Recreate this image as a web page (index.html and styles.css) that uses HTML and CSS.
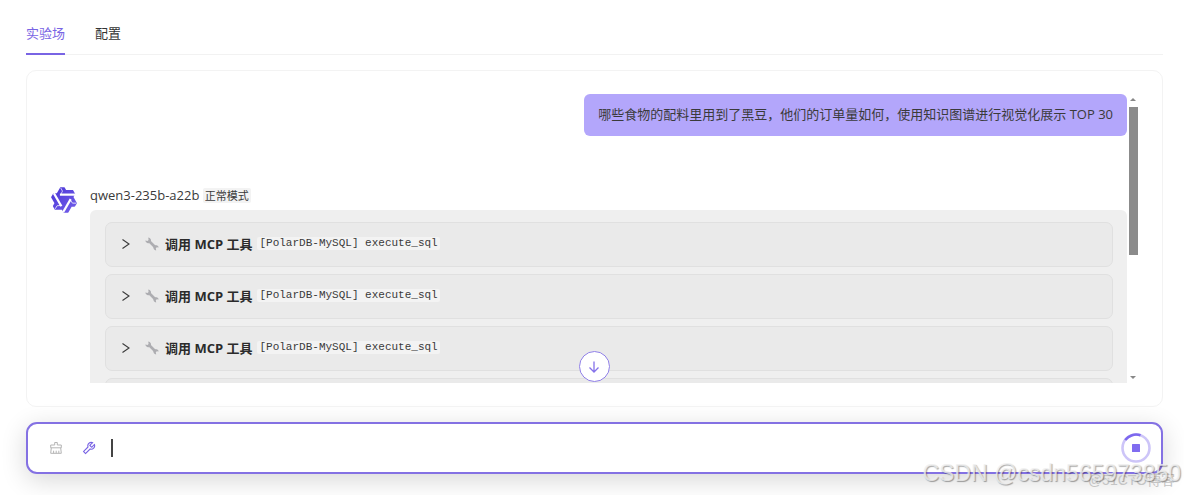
FILE: index.html
```html
<!DOCTYPE html>
<html lang="zh-CN">
<head>
    <meta charset="UTF-8">
    <meta name="viewport" content="width=device-width, initial-scale=1.0">
    <title>实验场</title>
    <link rel="stylesheet" href="styles.css">
</head>
<body>
    <!-- 图标 -->
    <svg class="sprite" aria-hidden="true">
        <symbol id="icon-right" viewBox="0 0 12 12">
            <path d="M2.500 1.500 9 6l-6.500 4.500" fill="none" stroke="currentColor" stroke-width="1.100"/>
        </symbol>
        <symbol id="icon-wrench" viewBox="0 0 14 14">
            <path d="M4 4 10.500 10.500" stroke="#adadb1" stroke-width="2.600"/>
            <path d="M3.200.5a3.100 3.100 0 0 1 2.200 5A3.100 3.100 0 0 1 .3 3.500l2.200.5 1.100-1.100zM8.800 9a2.900 2.900 0 0 1 4.900 1.600l-1.900-.3-1 1 .4 2.100A2.900 2.900 0 0 1 8.800 9z" fill="#adadb1"/>
        </symbol>
    </svg>

    <div class="page">
        <nav class="tabs">
            <a class="tab active" href="#playground">实验场</a>
            <a class="tab" href="#config">配置</a>
        </nav>

        <main class="chat">
            <div class="messages">
                <div class="bubble">哪些食物的配料里用到了黑豆，他们的订单量如何，使用知识图谱进行视觉化展示 TOP 30</div>

                <div class="answer">
                    <svg class="avatar" viewBox="0 0 24 24" aria-hidden="true">
                        <defs>
                            <linearGradient id="logo-fill" x1="0" y1="0" x2="1" y2="1">
                                <stop offset="0" stop-color="#4a35d6"/>
                                <stop offset="1" stop-color="#7460ea"/>
                            </linearGradient>
                            <g id="logo-arm" fill="none" stroke="#fff">
                                <path d="M8.500 7.400h13" stroke-width="1.900"/>
                                <path d="M9.200 7.400 10.700 4.400 9.200 1.700" stroke-width=".6"/>
                            </g>
                        </defs>
                        <path fill="url(#logo-fill)" d="M12.604 1.340c.393.69.784 1.382 1.174 2.075a.18.18 0 00.157.091h5.552c.174 0 .322.11.446.327l1.454 2.570c.19.337.24.478.024.837-.26.43-.513.864-.76 1.300l-.367.658c-.106.196-.223.28-.04.512l2.652 4.637c.172.301.111.494-.043.77-.437.785-.882 1.564-1.335 2.340-.159.272-.352.375-.68.37-.777-.016-1.552-.01-2.327.016a.099.099 0 00-.081.05 575.097 575.097 0 01-2.705 4.740c-.169.293-.38.363-.725.364-.997.003-2.002.004-3.017.002a.537.537 0 01-.465-.271l-1.335-2.323a.09.09 0 00-.083-.049H4.982c-.285.03-.553-.001-.805-.092l-1.603-2.770a.543.543 0 01-.002-.54l1.207-2.120a.198.198 0 000-.197 550.951 550.951 0 01-1.875-3.272l-.79-1.395c-.16-.31-.173-.496.095-.965.465-.813.927-1.625 1.387-2.436.132-.234.304-.334.584-.335a338.300 338.300 0 012.589-.001.124.124 0 00.107-.063l2.806-4.895a.488.488 0 01.422-.246c.524-.001 1.053 0 1.583-.006L11.704 1c.341-.003.724.032.9.34z"/>
                        <use href="#logo-arm"/>
                        <use href="#logo-arm" transform="rotate(120 12 12)"/>
                        <use href="#logo-arm" transform="rotate(240 12 12)"/>
                    </svg>
                    <div class="answer-main">
                        <div class="answer-head">qwen3-235b-a22b <span class="mode">正常模式</span></div>
                        <div class="answer-body">
                            <button class="tool" type="button">
                                <svg class="arrow"><use href="#icon-right"/></svg>
                                <svg class="wrench"><use href="#icon-wrench"/></svg>
                                <strong>调用 MCP 工具</strong>
                                <code>[PolarDB-MySQL] execute_sql</code>
                            </button>
                            <button class="tool" type="button">
                                <svg class="arrow"><use href="#icon-right"/></svg>
                                <svg class="wrench"><use href="#icon-wrench"/></svg>
                                <strong>调用 MCP 工具</strong>
                                <code>[PolarDB-MySQL] execute_sql</code>
                            </button>
                            <button class="tool" type="button">
                                <svg class="arrow"><use href="#icon-right"/></svg>
                                <svg class="wrench"><use href="#icon-wrench"/></svg>
                                <strong>调用 MCP 工具</strong>
                                <code>[PolarDB-MySQL] execute_sql</code>
                            </button>
                            <button class="tool" type="button" aria-label="调用 MCP 工具"></button>
                        </div>
                    </div>
                </div>
            </div>

            <div class="scrollbar" aria-hidden="true">
                <span class="scroll-up"></span>
                <div class="track"><div class="thumb"></div></div>
                <span class="scroll-down"></span>
            </div>

            <button class="to-bottom" type="button" aria-label="滚动到底部">
                <svg width="14" height="14" viewBox="0 0 14 14">
                    <path d="M7 1.500v10.500M2.500 7.500 7 12l4.500-4.500" fill="none" stroke="currentColor" stroke-width="1.300"/>
                </svg>
            </button>
        </main>

        <form class="composer">
            <button class="icon-btn clear" type="button" aria-label="清空对话">
                <svg width="14" height="14" viewBox="0 0 14 14">
                    <path d="M5.700 4V1.500h2.600V4h4v2.800H1.700V4zM2.300 6.800 1.700 12.300h10.600l-.6-5.500M4.600 12.300V9.700M7.200 12.300V9.700M9.800 12.300V9.700" fill="none" stroke="currentColor"/>
                </svg>
            </button>
            <button class="icon-btn" type="button" aria-label="工具">
                <svg width="14" height="14" viewBox="64 64 896 896">
                    <path fill="currentColor" d="M876.600 239.500c-.5-.9-1.200-1.800-2-2.500-5-5-13.100-5-18.100 0L684.200 409.300l-67.900-67.900L788.700 169c.8-.8 1.400-1.600 2-2.500 3.600-6.100 1.600-13.900-4.500-17.500-98.200-58-226.800-44.700-311.300 39.700-67 67-89.200 162-66.500 247.400l-293 293c-3 3-2.800 7.900.3 11l169.700 169.700c3.100 3.100 8.100 3.300 11 .3l292.900-292.900c85.500 22.800 180.500.7 247.600-66.400 84.400-84.500 97.700-213.100 39.700-311.300zM786 499.800c-58.100 58.100-145.300 69.300-214.600 33.600l-8.800 8.800-.1-.1-274 274.100-79.200-79.200 230.100-230.100s0 .1.1.1l52.800-52.800c-35.700-69.300-24.500-156.500 33.600-214.600a184.200 184.200 0 01144-53.500L537 318.900a32.050 32.050 0 000 45.300l124.500 124.500a32.050 32.050 0 0045.300 0l132.800-132.800c3.700 51.800-14.400 104.800-53.600 143.900z"/>
                </svg>
            </button>
            <span class="caret"></span>
            <input class="prompt" type="text" aria-label="输入消息">
            <button class="stop" type="button" aria-label="停止">
                <svg width="30" height="30" viewBox="0 0 30 30">
                    <circle cx="15" cy="15" r="13.500" fill="none" stroke="#cdc5f8" stroke-width="2.600"/>
                    <path d="M4.200 7A13.500 13.500 0 0 1 19.500 2.300" fill="none" stroke="#7d68ee" stroke-width="2.600"/>
                    <rect x="11" y="11" width="8" height="8" rx=".5" fill="#806cf0"/>
                </svg>
            </button>
        </form>
    </div>

    <div class="watermark site">@51CTO博客</div>
    <div class="watermark author">CSDN @csdn565973850</div>
</body>
</html>
```
FILE: styles.css
```css
* {
    box-sizing: border-box;
}

body {
    margin: 0;
    font-family: "Open Sans", "Noto Sans CJK SC", sans-serif;
    font-size: 13px;
    line-height: 20px;
    color: #3a3a3a;
    background: #fff;
}

button {
    font: inherit;
    color: inherit;
    cursor: pointer;
}

.sprite {
    display: none;
}

.page {
    display: flex;
    flex-direction: column;
    height: 100vh;
    padding: 14px 21px 21px 26px;
    overflow: hidden;
}

/* 标签页 */
.tabs {
    display: flex;
    gap: 30px;
    border-bottom: 1px solid #f2f2f2;
}

.tab {
    padding: 9px 0 10px;
    margin-bottom: -1px;
    border-bottom: 2px solid transparent;
    color: #333;
    text-decoration: none;
}

.tab.active {
    color: #7964e4;
    border-color: #7964e4;
}

/* 对话区 */
.chat {
    position: relative;
    display: flex;
    flex: 1;
    min-height: 0;
    margin: 15px 0;
    padding: 23px;
    border: 1px solid #f3f3f3;
    border-radius: 10px;
}

.messages {
    flex: 1;
    min-width: 0;
    overflow: hidden;
}

.bubble {
    width: fit-content;
    margin-left: auto;
    padding: 10px 14px 12px;
    border-radius: 6px;
    background: #b3a6fb;
}

.answer {
    display: flex;
    gap: 12px;
    margin-top: 49px;
}

.avatar {
    flex: none;
    width: 28px;
    height: 30px;
}

.answer-main {
    flex: 1;
}

.answer-head {
    margin-bottom: 4px;
}

.mode {
    padding: 0 2px;
    border-radius: 2px;
    background: #f3f3f3;
    font-size: 11px;
}

.answer-body {
    display: flex;
    flex-direction: column;
    gap: 7px;
    padding: 12px 14px 12px 15px;
    border-radius: 6px;
    background: #efefef;
}

.tool {
    display: flex;
    align-items: center;
    height: 45px;
    padding: 0 14px 2px;
    border: 1px solid #e0e0e0;
    border-radius: 7px;
    background: #eaeaea;
}

.tool strong {
    margin: 0 5px 0 6px;
    color: #2b2b2b;
}

.tool code {
    padding: 0 2px;
    border-radius: 2px;
    background: #f3f3f3;
    font: 11px/13px "Liberation Mono", monospace;
}

.arrow {
    width: 12px;
    height: 12px;
    margin-right: 13px;
}

.wrench {
    width: 14px;
    height: 14px;
}

/* 滚动条 */
.scrollbar {
    display: flex;
    flex-direction: column;
    align-items: center;
    width: 12px;
    padding: 4px 0;
}

.track {
    flex: 1;
    width: 9px;
    margin: 6px 0 5px;
}

.thumb {
    height: 56%;
    background: #8b8b8b;
}

.scroll-up,
.scroll-down {
    border: 3px solid transparent;
}

.scroll-up {
    border-top: 0;
    border-bottom-color: #888;
}

.scroll-down {
    border-bottom: 0;
    border-top-color: #888;
}

.to-bottom {
    position: absolute;
    bottom: 24px;
    left: 50%;
    display: grid;
    place-items: center;
    width: 31px;
    height: 31px;
    margin-left: -16px;
    padding: 0;
    border: 1px solid #9080e8;
    border-radius: 50%;
    background: #fff;
    color: #8572ea;
}

/* 输入框 */
.composer {
    display: flex;
    align-items: center;
    height: 52px;
    padding: 0 10px 0 21px;
    border: 2px solid #8471e3;
    border-radius: 11px;
    background: #fff;
    box-shadow: 0 6px 26px rgba(0, 0, 0, 0.16);
}

.icon-btn {
    display: flex;
    margin-right: 19px;
    padding: 0;
    border: 0;
    background: none;
    color: #7964e4;
}

.icon-btn.clear {
    color: #b5b5b5;
}

.caret {
    width: 2px;
    height: 18px;
    margin-left: -4px;
    background: #444;
}

.prompt {
    flex: 1;
    min-width: 0;
    border: 0;
    outline: 0;
    background: none;
    font: inherit;
}

.stop {
    display: flex;
    padding: 0;
    border: 0;
    background: none;
}

/* 水印 */
.watermark {
    position: absolute;
    font-family: "Liberation Sans", "Noto Sans CJK SC", sans-serif;
    white-space: nowrap;
    pointer-events: none;
}

.author {
    right: 3px;
    bottom: 8px;
    font-size: 23px;
    line-height: 28px;
    color: rgba(240, 240, 240, 0.8);
    text-shadow: 1px 1px 1px rgba(0, 0, 0, 0.35);
}

.site {
    right: 9px;
    bottom: 5px;
    font-size: 14px;
    color: #c4c4c4;
}
```
